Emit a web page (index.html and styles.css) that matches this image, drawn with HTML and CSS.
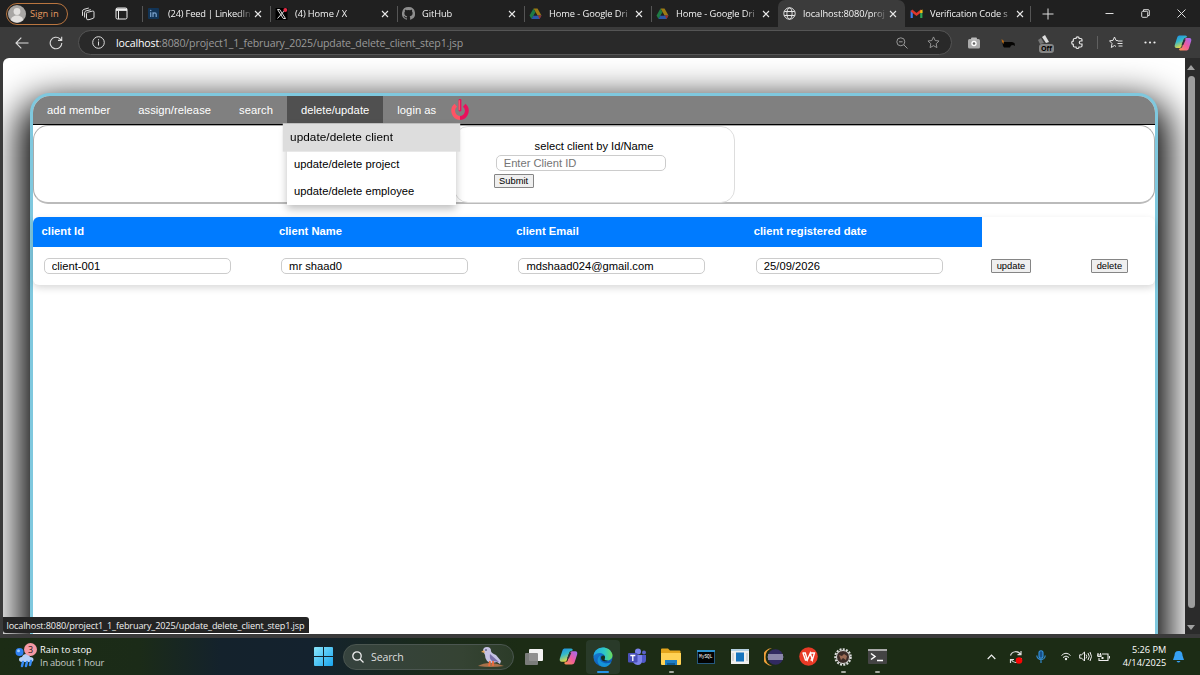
FILE: index.html
```html
<!DOCTYPE html>
<html lang="en">
<head>
<meta charset="utf-8">
<title>Update / delete client</title>
<link rel="stylesheet" href="styles.css">
</head>
<body>
<svg class="defs" width="0" height="0">
  <defs>
    <linearGradient id="pilotA" x1="0" y1="0" x2="0.4" y2="1"><stop offset="0" stop-color="#1c8be8"/><stop offset=".5" stop-color="#35b9c9"/><stop offset="1" stop-color="#e8d83c"/></linearGradient>
    <linearGradient id="pilotB" x1="1" y1="0" x2="0" y2="1"><stop offset="0" stop-color="#9b6cf5"/><stop offset=".5" stop-color="#ee5aa0"/><stop offset="1" stop-color="#ff9a4a"/></linearGradient>
    <linearGradient id="edgeA" x1="0" y1="0" x2="1" y2="0"><stop offset="0" stop-color="#1fa5e8"/><stop offset=".6" stop-color="#2fc9c4"/><stop offset="1" stop-color="#6bdc5a"/></linearGradient>
    <linearGradient id="edgeB" x1="0" y1="0" x2="0.6" y2="1"><stop offset="0" stop-color="#1b86dc"/><stop offset="1" stop-color="#0b55b0"/></linearGradient>
    <linearGradient id="win" x1="0" y1="0" x2="1" y2="1"><stop offset="0" stop-color="#8be6fb"/><stop offset="1" stop-color="#19a5ee"/></linearGradient>
    <symbol id="close" viewBox="0 0 8 8"><path d="M1 1l6 6M7 1L1 7" stroke="#e8e8e8" stroke-width="1.100" fill="none"/></symbol>
    <symbol id="drive" viewBox="0 0 12 11"><path d="M4 .5h4l4 7H8z" fill="#9c7a14"/><path d="M4 .5l2 3.900L2 11 0 7.500z" fill="#1e7a44"/><path d="M4 7.500h8L10 11H2z" fill="#2b56a8"/><path d="M8.500 7.500H12L10 11z" fill="#a03024"/><path d="M6 4.400l1.800 3.100H4.200z" fill="#202020"/></symbol>
    <symbol id="copilot" viewBox="0 0 18 18"><path d="M6 1.500h5.500c1 0 1.400.8 1.600 1.600L10 4.500 7.500 12c-.5 1.500-1 2-2.500 2H2.500C.8 14 .4 12.500.8 11l2.400-7.500C3.700 2 4.500 1.500 6 1.500z" fill="url(#pilotA)"/><path d="M12 16.500H6.500c-1 0-1.400-.8-1.600-1.600L8 13.500 10.500 6c.5-1.500 1-2 2.500-2h2.500c1.700 0 2.100 1.500 1.700 3l-2.400 7.500c-.5 1.500-1.300 2-2.800 2z" fill="url(#pilotB)"/><path d="M8.900 7.600l.9-2.200h1.900L9.300 11H7.600z" fill="#2c3038"/></symbol>
  </defs>
</svg>

<header class="tabs">
  <div class="profile"><svg width="18" height="18" viewBox="0 0 18 18"><circle cx="9" cy="9" r="9" fill="#a8a6a4"/><circle cx="9" cy="6.500" r="3.400" fill="#e2e0de"/><path d="M3 15c0-6 12-6 12 0-3 3.300-9 3.300-12 0z" fill="#e2e0de"/></svg><span>Sign in</span></div>
  <svg class="workspaces" width="14" height="14" viewBox="0 0 14 14" fill="none" stroke="#ddd" stroke-width="1"><path d="M5.500 6.500q0-1 1-1.200l5-1.200q1.500-.3 1.500 1v5q0 1-1 1.300l-4 1.300q-2.500.6-2.500-1.500zM3.600 10.500V5.800q0-1.500 1.300-1.900l5-1.200M1.500 8.800V4.300q0-1.500 1.300-1.900l5-1.400"/></svg>
  <svg class="tablist" width="13" height="13" viewBox="0 0 13 13" fill="none" stroke="#eee"><rect x="1" y="1" width="11" height="11" rx="1.500"/><path d="M1 2.700h11" stroke-width="2.400"/><path d="M3.500 4v8" /></svg>
  <div class="tab first"><svg width="11" height="11" viewBox="0 0 11 11"><rect width="11" height="11" rx="1" fill="#123456"/><path d="M2.700 4.300V9M5 9V4.300M5 6.300c.3-2 3.200-2 3.200 0V9" stroke="#7ba3cd" stroke-width="1.200" fill="none"/><circle cx="2.700" cy="2.500" r=".8" fill="#7ba3cd"/></svg><span>(24) Feed | LinkedIn</span><svg width="8" height="8"><use href="#close"/></svg></div>
  <div class="tab"><svg width="12" height="12" viewBox="0 0 12 12"><rect width="12" height="12" fill="#000"/><path d="M2 1.500h2.200L10 10.500H7.800zM10 1.500L2 10.500" stroke="#ddd" fill="none"/><circle cx="9.800" cy="2" r="1.900" fill="#e82b46"/></svg><span>(4) Home / X</span><svg width="8" height="8"><use href="#close"/></svg></div>
  <div class="tab"><svg width="13" height="13" viewBox="0 0 16 16"><path fill="#8d8d8d" d="M8 0a8 8 0 0 0-2.500 15.600c.4.100.5-.2.500-.4v-1.400c-2.200.5-2.700-1-2.700-1-.4-.9-.9-1.200-.9-1.200-.7-.5.1-.5.1-.5.800.1 1.200.8 1.200.8.7 1.200 1.900.9 2.300.7.100-.5.300-.9.500-1.100-1.800-.2-3.600-.9-3.600-4 0-.9.300-1.600.8-2.100-.1-.2-.4-1 .1-2.100 0 0 .7-.2 2.200.8a7.500 7.500 0 0 1 4 0c1.500-1 2.200-.8 2.200-.8.400 1.100.200 1.900.1 2.100.5.600.8 1.300.8 2.100 0 3.100-1.900 3.700-3.700 3.900.3.300.6.800.6 1.500v2.300c0 .2.100.5.600.4A8 8 0 0 0 8 0z"/></svg><span>GitHub</span><svg width="8" height="8"><use href="#close"/></svg></div>
  <div class="tab"><svg width="12" height="11"><use href="#drive"/></svg><span>Home - Google Dri</span><svg width="8" height="8"><use href="#close"/></svg></div>
  <div class="tab"><svg width="12" height="11"><use href="#drive"/></svg><span>Home - Google Dri</span><svg width="8" height="8"><use href="#close"/></svg></div>
  <div class="tab active"><svg width="13" height="13" viewBox="0 0 13 13" fill="none" stroke="#e4e4e4" stroke-width="1"><circle cx="6.500" cy="6.500" r="5.700"/><ellipse cx="6.500" cy="6.500" rx="2.600" ry="5.700"/><path d="M1.200 4.500h10.600M1.200 8.500h10.600"/></svg><span>localhost:8080/proj</span><svg width="8" height="8"><use href="#close"/></svg></div>
  <div class="tab last"><svg width="12" height="9" viewBox="0 0 12 9"><path d="M1.200 9V1.500" stroke="#3f7de8" stroke-width="2.200"/><path d="M10.800 9V1.500" stroke="#2fa455" stroke-width="2.200"/><path d="M1 1.500l5 4 5-4" stroke="#e0372b" stroke-width="2.300" fill="none"/><path d="M9.700 1.500L12 .5V4H9.700z" fill="#f4bc16"/></svg><span>Verification Code s</span><svg width="8" height="8"><use href="#close"/></svg></div>
  <svg class="plus" width="12" height="12" viewBox="0 0 12 12" stroke="#ddd"><path d="M6 .5v11M.5 6h11"/></svg>
  <div class="window">
    <svg width="9" height="9" viewBox="0 0 9 9" stroke="#ddd"><path d="M.5 4.500h8"/></svg>
    <svg width="9" height="9" viewBox="0 0 9 9" fill="none" stroke="#ddd"><rect x=".7" y="2.300" width="6" height="6" rx="1"/><path d="M2.500 2V.7h4.600q1.200 0 1.200 1.200v4.600H7"/></svg>
    <svg width="9" height="9" viewBox="0 0 9 9" stroke="#ddd"><path d="M.5.5l8 8M8.500.5l-8 8"/></svg>
  </div>
</header>

<div class="toolbar">
  <svg class="back" width="14" height="12" viewBox="0 0 14 12" fill="none" stroke="#ddd" stroke-width="1.100"><path d="M13.500 6H1M6.300.7L1 6l5.300 5.300"/></svg>
  <svg class="reload" width="14" height="14" viewBox="0 0 14 14" fill="none" stroke="#ddd" stroke-width="1.100"><path d="M12.800 7A5.800 5.800 0 1 1 11 2.800L12.500 4.200M12.700.7v3.700H9"/></svg>
  <div class="address">
    <svg width="13" height="13" viewBox="0 0 13 13" fill="none" stroke="#ddd" stroke-width="1"><circle cx="6.500" cy="6.500" r="5.800"/><path d="M6.500 5.500v4M6.500 3.200v1.200"/></svg>
    <span class="url"><b>localhost</b>:8080/project1_1_february_2025/update_delete_client_step1.jsp</span>
    <svg class="zoomout" width="12" height="12" viewBox="0 0 12 12" fill="none" stroke="#999"><circle cx="4.800" cy="4.800" r="4"/><path d="M7.800 7.800l3.700 3.700M3 4.800h3.600"/></svg>
    <svg width="13" height="13" viewBox="0 0 14 14" fill="none" stroke="#999"><path d="M7 1l1.800 3.900 4.200.5-3.100 2.900.8 4.200L7 10.400l-3.700 2.100.8-4.200L1 5.400l4.200-.5z"/></svg>
  </div>
  <div class="extensions">
    <svg width="12" height="12" viewBox="0 0 12 12"><rect y="2" width="12" height="9.500" rx="1.500" fill="#aaa"/><rect x="3" y=".5" width="6" height="3" rx="1" fill="#bbb"/><circle cx="6" cy="6.500" r="2.700" fill="#fff"/><circle cx="6" cy="6.500" r="1.300" fill="#666"/></svg>
    <svg class="bird" width="14" height="10" viewBox="0 0 14 10"><path d="M1 2l2 2 8 0 2.500 1 .5 3-2-1-2 .5-1 2-6 0L2 8z" fill="#050403"/><path d="M.5 1l2.500 2-.5 3L1 4z" fill="#b56a18"/></svg>
    <div class="offtool"><svg width="13" height="13" viewBox="0 0 13 13"><path d="M5 2l3-2 4 7-3 1z" fill="#ddd"/><path d="M1 5l3-2 3 5-4 1z" fill="#777"/></svg><i>Off</i></div>
    <svg class="puzzle" width="13" height="13" viewBox="0 0 13 13" fill="none" stroke="#e5e5e5" stroke-width="1.200"><path d="M3.500 2.500H5a1.600 1.600 0 0 1 3.200 0h1.600q1.200 0 1.200 1.200V5H9.800a1.500 1.500 0 0 0 0 3H11v1.800q0 1.200-1.200 1.200H8a1.500 1.500 0 0 1-3 0H3.500q-1.200 0-1.200-1.200V8.300a1.600 1.600 0 0 1 0-3.200V3.700q0-1.200 1.200-1.200z"/></svg>
    <s></s>
    <svg class="favorites" width="14" height="13" viewBox="0 0 14 13" fill="none" stroke="#e5e5e5"><path d="M9 4.700L7 4.400 5.500 1 4 4.400l-3.500.4L3 7.500l-.7 4 3.200-2 1.500 1M9 5h4.500M8.500 7.500h5M9.500 10h4"/></svg>
    <svg class="more" width="12" height="3" viewBox="0 0 12 3" fill="#eee"><circle cx="1.500" cy="1.500" r="1.100"/><circle cx="6" cy="1.500" r="1.100"/><circle cx="10.500" cy="1.500" r="1.100"/></svg>
    <svg class="pilot" width="18" height="18"><use href="#copilot"/></svg>
  </div>
</div>

<main class="browser">
  <div class="viewport">
    <section class="app">
      <nav class="menu">
        <a>add member</a><a>assign/release</a><a>search</a>
        <div class="dropdown"><a class="open">delete/update</a>
          <div class="dropmenu"><a class="hover">update/delete client</a><a>update/delete project</a><a>update/delete employee</a></div>
        </div>
        <a>login as</a>
        <svg class="power" width="20" height="22" viewBox="0 0 20 22" fill="none" stroke-width="3.800"><path d="M5.800 6.300A7.200 7.200 0 0 0 10 19" stroke="#ff5364"/><path d="M14.200 6.300A7.200 7.200 0 0 1 10 19" stroke="#ea0f5c"/><path d="M10 1.200v10" stroke="#ea0f5c" stroke-width="2.800" stroke-linecap="round"/><path d="M9.300 1.200v10" stroke="#ff5364" stroke-width="1.400"/></svg>
      </nav>
      <div class="panel">
        <form class="finder">
          <label>select client by Id/Name</label>
          <input type="text" placeholder="Enter Client ID">
          <button type="button">Submit</button>
        </form>
      </div>
      <div class="grid">
        <div class="head"><span>client Id</span><span>client Name</span><span>client Email</span><span>client registered date</span></div>
        <div class="row">
          <div><input type="text" value="client-001"></div>
          <div><input type="text" value="mr shaad0"></div>
          <div><input type="text" value="mdshaad024@gmail.com"></div>
          <div><input type="text" value="25/09/2026"></div>
          <div><button>update</button></div>
          <div><button>delete</button></div>
        </div>
      </div>
    </section>
    <div class="status">localhost:8080/project1_1_february_2025/update_delete_client_step1.jsp</div>
  </div>
  <div class="scrollbar"><i class="up"></i><i class="thumb"></i><i class="down"></i></div>
</main>

<footer class="taskbar">
  <div class="weather">
    <div class="forecast">
      <svg width="23" height="24" viewBox="0 0 23 24"><circle cx="4.500" cy="7" r="4" fill="#2d7ff0"/><circle cx="3.500" cy="5.700" r="1.500" fill="#9accff"/><path d="M7 17c-4 0-4-5 0-5 1-4 7-4 8 0 5 0 4 5 1 5z" fill="#b5d0f7"/><path d="M8 17l-1 4M12 17l-1 4M16 16l-1 4" stroke="#378cf5" stroke-width="2.500" stroke-linecap="round"/></svg>
      <b>3</b>
    </div>
    <p><span>Rain to stop</span><small>In about 1 hour</small></p>
  </div>
  <svg class="start" width="19" height="19" viewBox="0 0 19 19" fill="url(#win)"><path d="M0 1q0-1 1-1h8v9H0zM10 0h8q1 0 1 1v8h-9zM0 10h9v9H1q-1 0-1-1zM10 10h9v8q0 1-1 1h-8z"/></svg>
  <div class="search">
    <svg width="12" height="12" viewBox="0 0 12 12" fill="none" stroke="#eee" stroke-width="1.300"><circle cx="5" cy="5" r="4.200"/><path d="M8 8l3.500 3.500"/></svg>
    <span>Search</span>
    <svg width="28" height="22" viewBox="0 0 28 22"><path d="M1 20q5-3 12-3 6 0 14 3-13 2-26 0z" fill="#a8714a"/><path d="M6 5q0-4 4-4t4 4q0 2 5 4l5 6-1 3-3-2-5 1q-7-1-7-8z" fill="#c5c2e3"/><path d="M13 8l9 8-7-1q-3-2-2-7z" fill="#7a70aa"/><path d="M7 4L4 6l4 1z" fill="#e0a45a"/><circle cx="9" cy="4" r=".8" fill="#2b2545"/><path d="M13 15l-1 5M16 15v5" stroke="#ef6b3d" stroke-width="1.800"/></svg>
  </div>
  <div class="apps">
    <div><svg width="20" height="18" viewBox="0 0 20 18"><rect x="5" y="1" width="14" height="12" rx="1" fill="#f3f3f3"/><rect x="1" y="5" width="13" height="12" rx="1" fill="#858585" opacity=".9"/></svg></div>
    <div><svg width="19" height="19"><use href="#copilot"/></svg></div>
    <div class="current"><svg width="20" height="20" viewBox="0 0 20 20"><circle cx="10" cy="10" r="9.600" fill="url(#edgeB)"/><path d="M.5 9C1-1 16-3 19.300 7c1 4-2 6.500-5.300 6.500-2 0-3-.7-2.300-1.800C14 7 5 3 .5 9z" fill="url(#edgeA)"/><path d="M8 8c-3 4 0 9 8 8q2-.4 2.500-1-4 6.500-10 4.500C3 17 3.500 10 8 8z" fill="#1593d8"/><path d="M11.700 11.700c-.8 1 .3 2 3.300 2-3 1.500-7 .3-7-3 0-1.700 1.500-2.500 2.700-2.200 1.400.5 1.700 2 1 3.200z" fill="#17301c"/></svg><u></u></div>
    <div><svg width="20" height="18" viewBox="0 0 20 18"><circle cx="11" cy="3.500" r="3" fill="#7b83eb"/><circle cx="17" cy="4.500" r="2" fill="#5b62c9"/><path d="M13 7h6v5c0 3-3 4-5 2z" fill="#5059c9"/><path d="M6 7h9v6c0 5-7 5-9 1z" fill="#7b83eb"/><rect x="1" y="5" width="9.500" height="9.500" rx="1" fill="#4a50b8"/><path d="M3.300 7.500h5M5.800 7.500V13" stroke="#fff" stroke-width="1.300"/></svg></div>
    <div><svg width="20" height="18" viewBox="0 0 20 18"><path d="M0 1.500q0-1 1-1h6l2 2h9.500q1 0 1 1V16H0z" fill="#e3a51c"/><path d="M0 5h20v11q0 1-1 1H1q-1 0-1-1z" fill="#ffd255"/><path d="M4 12h12v5H4z" fill="#1e7fc4"/><path d="M6 15h8v2H6z" fill="#115b93"/></svg><u></u></div>
    <div><svg width="18" height="14" viewBox="0 0 18 14"><rect x=".5" y=".5" width="17" height="13" fill="#020202" stroke="#25587e"/><path d="M0 1h18" stroke="#2c91cd" stroke-width="2"/><text class="sql" x="2" y="7.500">MySQL</text></svg></div>
    <div><svg width="18" height="15" viewBox="0 0 18 15"><path d="M0 0h18v15H0z" fill="#efefef"/><path d="M0 0h18v2H0z" fill="#b4d0e2"/><rect x="5" y="3.500" width="8" height="9" fill="#1673bd"/><path d="M2 4v8M16 4v8" stroke="#bbb"/></svg></div>
    <div><svg width="20" height="18" viewBox="0 0 20 18"><path d="M8 0a9 9 0 0 0 0 18A9.500 9.500 0 0 1 8 0z" fill="#f0a03a"/><circle cx="11.500" cy="9" r="7.800" fill="#312a61"/><path d="M4 7h15M3.700 9h15.600M4 11h15" stroke="#e4e2f2" stroke-width="1.100"/></svg></div>
    <div><svg width="19" height="19" viewBox="0 0 19 19"><circle cx="9.500" cy="9.500" r="9.300" fill="#e93a26"/><path d="M3.500 6h2.800l2 7 3-7 2 7L15.500 6H11M4 6l2.500 7h1.800M11.500 13h1.800" stroke="#fff" stroke-width="1.400" fill="none"/></svg></div>
    <div><svg width="18" height="18" viewBox="0 0 18 18"><circle cx="9" cy="9" r="7.800" fill="none" stroke="#ddd" stroke-width="2" stroke-dasharray="2 1.300"/><circle cx="9" cy="9" r="6.500" fill="#3b2b27" stroke="#ddd"/><path d="M5 7l3 1 2-2 3 2-1 4-3-2-2 2z" fill="#9b6b55"/></svg><u></u></div>
    <div><svg width="19" height="15" viewBox="0 0 19 15"><rect width="19" height="15" rx="1" fill="#444"/><path d="M0 1h19" stroke="#aaa" stroke-width="2"/><path d="M3 4.500l4 3-4 3M9 11.500h6" stroke="#fff" stroke-width="1.500" fill="none"/></svg><u></u></div>
  </div>
  <div class="tray">
    <svg width="9" height="6" viewBox="0 0 9 6" fill="none" stroke="#eee" stroke-width="1.200"><path d="M.7 5l3.800-4 3.800 4"/></svg>
    <svg width="14" height="14" viewBox="0 0 14 14" fill="none" stroke="#ddd" stroke-width="1.200"><path d="M1.500 5.500a5.500 5.500 0 0 1 10-1M12 1v3.700H8.500M12.500 8a5.500 5.500 0 0 1-10 2M1.500 13V9.500H5"/><circle cx="10" cy="10.500" r="3.300" fill="#fa0505" stroke="none"/></svg>
    <svg width="10" height="13" viewBox="0 0 10 13" fill="none" stroke="#3594e0" stroke-width="1.100"><rect x="3" y=".7" width="4" height="7.500" rx="2" fill="#17518a"/><path d="M.8 5.500a4.200 4.200 0 0 0 8.400 0M5 10v3"/></svg>
    <svg width="10" height="9" viewBox="0 0 10 9" fill="none" stroke="#eee" stroke-width="1"><path d="M.5 3.500q4.500-4.500 9 0M2 5.500q3-3 6 0"/><circle cx="5" cy="7" r="1.200" fill="#eee" stroke="none"/></svg>
    <svg width="13" height="11" viewBox="0 0 13 11" fill="none" stroke="#eee"><path d="M.7 3.800h2L5.500 1v9L2.700 7.200h-2zM7 3.500q1.500 2 0 4M9 2q2.500 3.500 0 7M11 1q3 4.500 0 9"/></svg>
    <svg width="13" height="10" viewBox="0 0 13 10" fill="none" stroke="#eee" stroke-width="1.100"><path d="M5 2h6v6.500H2V6M12.500 4v2.500M1 1v2M3.500 1v2M.5 3h3.500v1.500h-3z"/><rect x="4.500" y="5" width="2" height="2" fill="#eee" stroke="none"/></svg>
    <p>5:26 PM<br>4/14/2025</p>
    <svg width="11" height="12" viewBox="0 0 11 12" fill="#36a0f4"><path d="M5.500 0c3 0 4 2 4 4.500L11 9H0l1.500-4.500C1.500 2 2.500 0 5.500 0zM3.500 10h4q-2 3-4 0z"/></svg>
  </div>
</footer>
</body>
</html>
```
FILE: styles.css
```css
* { box-sizing: border-box; }
body { margin: 0; width: 1200px; height: 675px; overflow: hidden; display: flex; flex-direction: column; background: #3a3a3a; font-family: "Open Sans", "Noto Sans", sans-serif; }
svg { display: block; flex: none; }
.defs { position: absolute; }
p { margin: 0; }

.tabs { height: 27px; flex: none; display: flex; align-items: center; background: #202020; font-size: 9.3px; color: #f4f4f4; }
.profile { width: 62px; height: 22px; margin-left: 6px; display: flex; align-items: center; gap: 4px; padding-left: 1px; border: 1px solid #b9753f; border-radius: 11px; color: #e59b61; white-space: nowrap; }
.workspaces { margin-left: 13px; }
.tablist { margin-left: 20px; }
.tab { width: 127px; height: 27px; flex: none; display: flex; align-items: center; padding: 0 8px 0 4px; position: relative; }
.tab::before { content: ""; width: 1px; height: 16px; background: #555; margin-left: -4px; margin-right: 4px; }
.tab.first { margin-left: 14px; width: 128px; }
.tab > svg:first-child { width: 13px; }
.tab span { flex: 1; margin: 0 0 0 7px; white-space: nowrap; font-weight: 500; letter-spacing: -.09px; -webkit-mask-image: linear-gradient(90deg, #000 80%, rgba(0,0,0,.15) 96%); mask-image: linear-gradient(90deg, #000 80%, rgba(0,0,0,.15) 96%); }
.tab.first span { letter-spacing: -.2px; margin-left: 8px; }
.tab.active { background: #3b3b3b; border-radius: 7px 7px 0 0; width: 127px; }
.tab.active::before, .tab.last::before { background: transparent; }
.tab.last span { letter-spacing: -.16px; margin-left: 7px; }
.tab.last::after { content: ""; position: absolute; right: 1px; top: 6px; width: 1px; height: 16px; background: #555; }
.plus { margin-left: 10px; }
.window { margin-left: auto; margin-right: 14px; display: flex; gap: 27px; }

.toolbar { height: 31px; flex: none; display: flex; align-items: center; background: #3b3b3b; }
.back { margin-left: 15px; }
.reload { margin-left: 20px; }
.address { width: 874px; height: 25px; margin-left: 15px; display: flex; align-items: center; padding: 0 11px 0 13px; border: 1px solid #555; border-radius: 13px; background: #292929; }
.url { flex: 1; margin-left: 11px; font-size: 10.6px; letter-spacing: -.145px; color: #999; white-space: nowrap; }
.url b { font-weight: 400; color: #fff; }
.zoomout { margin-right: 19px; }
.extensions { flex: 1; display: flex; align-items: center; padding-left: 16px; }
.bird { margin-left: 21px; }
.offtool { margin-left: 22px; width: 15px; height: 16px; position: relative; }
.offtool i { position: absolute; left: 2px; top: 9px; padding: 0 2px; border-radius: 3px; background: #858585; color: #000; font: 700 7px/9px "Open Sans", sans-serif; }
.puzzle { margin-left: 19px; }
.extensions s { width: 1px; height: 13px; margin-left: 13px; background: #606060; }
.favorites { margin-left: 11px; }
.more { margin-left: 21px; }
.pilot { margin-left: 18px; }

.browser { height: 576px; flex: none; display: flex; padding-left: 3px; }
.viewport { width: 1182px; height: 576px; position: relative; overflow: hidden; background: #fff; border-radius: 6px 0 0 0; padding: 35px 27px 0; }
.app { height: 640px; border: 3px solid #7fc8de; border-radius: 20px 20px 0 0; background: #fff; box-shadow: 0 18px 37px 11px #000; font: 11.2px "Liberation Sans", Arial, sans-serif; color: #000; }
.menu { height: 29px; display: flex; align-items: stretch; background: #808080; border-bottom: 1px solid #000; border-radius: 17px 17px 0 0; color: #fff; line-height: 28px; }
.menu a { display: block; padding: 0 14px; letter-spacing: .045px; white-space: nowrap; }
.dropdown { position: relative; height: 27px; }
.dropdown .open { height: 27px; background: #505050; }
.dropmenu { position: absolute; z-index: 2; left: 0; top: 28px; width: 169px; background: #fff; color: #000; box-shadow: 0 4px 8px rgba(0,0,0,.25); line-height: 27px; }
.dropmenu a { padding: 0 7px; height: 27px; }
.dropmenu .hover { background: #ddd; transform: scale(1.05); line-height: 26px; }
.power { align-self: center; margin-top: -1px; }
.panel { height: 79px; border: 1px solid #aaa; border-bottom-width: 2px; border-bottom-color: #bbb; border-radius: 15px; display: flex; justify-content: center; }
.finder { width: 281px; height: 77px; border: 1px solid #ddd; border-radius: 14px; display: flex; flex-direction: column; align-items: flex-start; padding: 12px 39px 0; }
.finder label { align-self: center; line-height: 14px; }
input { display: block; height: 16px; border: 1px solid #ccc; border-radius: 5px; padding: 0 7px 0 7.200px; background: #fff; font: 11.2px "Liberation Sans", Arial, sans-serif; color: #000; }
.finder input { width: 170px; margin: 2px 0 3px 2px; padding-bottom: 1px; }
input::placeholder { color: #757575; }
button { display: block; height: 14px; padding: 0 4.600px; border: 1px solid #858585; border-radius: 1px; background: #efefef; font: 9.33px/11px "Liberation Sans", Arial, sans-serif; color: #000; white-space: nowrap; }
.grid { height: 68px; margin-top: 13px; border-radius: 6px; box-shadow: 0 3px 7px rgba(0,0,0,.15); background: #fff; }
.head { width: 949px; height: 30px; display: grid; grid-template-columns: repeat(4, 237.400px); align-items: center; border-radius: 6px 0 0 0; background: #007bff; color: #fff; font-weight: 700; padding-bottom: 2px; letter-spacing: .03px; }
.head span { padding-left: 8.500px; }
.row { height: 38px; display: grid; grid-template-columns: repeat(4, 237.400px) 100px 72px; align-items: center; }
.row div { padding-left: 8.500px; }
.row input { width: 187px; margin-left: 2px; }
.status { position: absolute; left: 0; bottom: 1px; width: 306px; height: 16px; padding-left: 3.500px; border-radius: 0 3px 0 3px; background: #242424; color: #f0f0f0; font-size: 9.1px; letter-spacing: -.125px; line-height: 17px; white-space: nowrap; }
.scrollbar { width: 15px; display: flex; flex-direction: column; align-items: center; background: #2b2b2b; padding: 7px 3px 4px 0; }
.up, .down { border: 4px solid transparent; border-top: 0; border-bottom: 5px solid #a0a0a0; }
.down { border-bottom: 0; border-top: 5px solid #a0a0a0; }
.thumb { width: 7px; height: 532px; margin: 6px 0 auto; border-radius: 4px; background: #9d9d9d; }

.taskbar { height: 37px; margin-top: 4px; flex: none; display: flex; align-items: center; color: #fff; background: linear-gradient(90deg, #1c2c15 0, #1b2b18 140px, #14222c 220px, #14222e 310px, #1a2a1a 430px, #1c2c15 520px); }
.weather { width: 299px; margin-left: 15px; display: flex; align-items: center; gap: 2px; font-size: 9.3px; line-height: 12.500px; }
.weather span, .weather small { display: block; font-size: 9.3px; }
.weather small { color: #c8cdc6; letter-spacing: -.2px; }
.forecast { position: relative; }
.forecast b { position: absolute; left: 9px; top: -2px; width: 13px; height: 13px; border-radius: 50%; background: #f69aa5; color: #291818; text-align: center; font: 9px/13px "Open Sans", sans-serif; }
.search { width: 171px; height: 26px; margin-left: 10px; display: flex; align-items: center; border: 1px solid #4b5650; border-radius: 13px; background: linear-gradient(90deg, #36433e, #354333 70%, #2c3c29); padding: 0 8px; font-size: 10.6px; color: #ddd; }
.search span { flex: 1; margin-left: 7px; letter-spacing: -.15px; }
.apps { display: flex; margin-left: 3px; }
.apps div { width: 34.300px; height: 34px; display: flex; align-items: center; justify-content: center; position: relative; }
.apps .current { background: #293a29; border-radius: 4px; }
.apps u { position: absolute; bottom: 1px; left: 15px; width: 5px; height: 2px; border-radius: 1px; background: #a5aaa0; }
.apps .current u { left: 11px; width: 12px; background: #2694e8; }
.sql { font: 4.500px "Liberation Mono", monospace; fill: #fff; }
.tray { flex: 1; display: flex; align-items: center; margin-left: 93px; }
.tray svg:nth-of-type(2) { margin-left: 13px; }
.tray svg:nth-of-type(3) { margin-left: 13px; }
.tray svg:nth-of-type(4) { margin-left: 15px; }
.tray svg:nth-of-type(5) { margin-left: 8px; }
.tray svg:nth-of-type(6) { margin-left: 5px; }
.tray p { width: 56px; text-align: right; font-size: 9.2px; line-height: 12.500px; }
.tray svg:last-child { margin-left: 7px; }
```
